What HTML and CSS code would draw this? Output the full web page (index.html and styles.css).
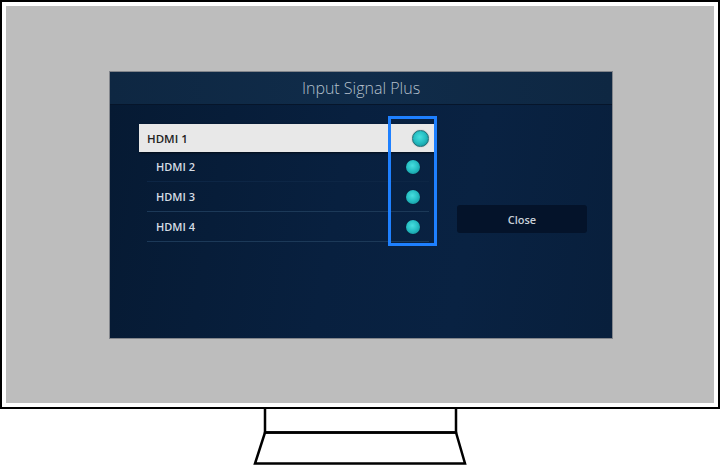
FILE: index.html
```html
<!DOCTYPE html>
<html>
<head>
<meta charset="utf-8">
<link rel="stylesheet" href="styles.css">
</head>
<body>
<div class="monitor">
  <div class="screen">
    <div class="dialog">
      <div class="titlebar">Input Signal Plus</div>
      <div class="content">
        <div class="list">
          <div class="row selected"><span>HDMI 1</span><i class="dot big"></i></div>
          <div class="row faint"><span>HDMI 2</span><i class="dot"></i></div>
          <div class="row"><span>HDMI 3</span><i class="dot"></i></div>
          <div class="row"><span>HDMI 4</span><i class="dot"></i></div>
        </div>
        <div class="close">Close</div>
        <div class="highlight"></div>
      </div>
    </div>
  </div>
</div>
<svg class="stand" width="720" height="56" viewBox="0 0 720 56">
  <polyline points="265,0 265,23.5 456,23.5 456,0" fill="none" stroke="#000" stroke-width="2.5"/>
  <polygon points="265,23.5 456,23.5 465,54.5 255,54.5" fill="none" stroke="#000" stroke-width="2.5"/>
</svg>
</body>
</html>
```
FILE: styles.css
```css
html, body {
  margin: 0;
  padding: 0;
  background: #fff;
}
body {
  width: 720px;
  height: 465px;
  overflow: hidden;
  font-family: "Open Sans", "Noto Sans", sans-serif;
}
.monitor {
  width: 720px;
  height: 409px;
  box-sizing: border-box;
  border: 2px solid #000;
  padding: 4px;
}
.screen {
  height: 100%;
  background: #bdbdbd;
  padding: 66px 0 0 104px;
  box-sizing: border-box;
}
.dialog {
  width: 502px;
  height: 266px;
  display: flex;
  flex-direction: column;
  background: #071c37;
  box-shadow: 0 0 0 1px rgba(20, 30, 45, 0.35);
}
.titlebar {
  height: 32px;
  flex: none;
  background: linear-gradient(90deg, #0e2742 0%, #102c4a 50%, #0e2742 100%);
  border-bottom: 1px solid #06152a;
  color: #b4c0cc;
  font-size: 16px;
  font-weight: 300;
  display: flex;
  align-items: center;
  justify-content: center;
}
.content {
  position: relative;
  flex: 1;
  display: flex;
  align-items: flex-start;
  padding: 19px 0 0 37px;
  background: linear-gradient(100deg, #061a33 0%, #08203f 45%, #092242 70%, #081f3c 100%);
}
.list {
  width: 282px;
  display: flex;
  flex-direction: column;
}
.row {
  height: 29px;
  display: flex;
  align-items: center;
  justify-content: space-between;
  padding: 0 9px 0 9px;
  border-bottom: 1px solid #1c3958;
  color: #d6dde5;
  font-size: 11px;
  font-weight: 600;
}
.row.faint {
  border-bottom-color: #0d2645;
}
.row.selected {
  height: 28px;
  margin: 0 -5px 0 -8px;
  padding: 0 5px 0 8px;
  background: #e8e8e8;
  color: #222;
  font-size: 11.5px;
  border-bottom: none;
  box-shadow: 1px 1px 2px rgba(0, 0, 0, 0.6);
}
.dot {
  width: 14px;
  height: 14px;
  border-radius: 50%;
  background: radial-gradient(circle at 45% 40%, #47dede 0%, #27c0c4 45%, #169ca4 80%, #0f7f88 100%);
  box-shadow: 0 0 1px rgba(0, 0, 0, 0.5);
}
.dot.big {
  width: 15px;
  height: 15px;
  border: 1px solid #1d6f78;
}
.close {
  margin: 81px 0 0 28px;
  width: 130px;
  height: 28px;
  border-radius: 3px;
  background: #04132a;
  color: #c9d0d8;
  font-size: 11px;
  font-weight: 600;
  display: flex;
  align-items: center;
  justify-content: center;
}
.highlight {
  position: absolute;
  left: 278px;
  top: 11px;
  width: 43px;
  height: 124px;
  border: 3px solid #1e80ff;
}
.stand {
  display: block;
}
```
